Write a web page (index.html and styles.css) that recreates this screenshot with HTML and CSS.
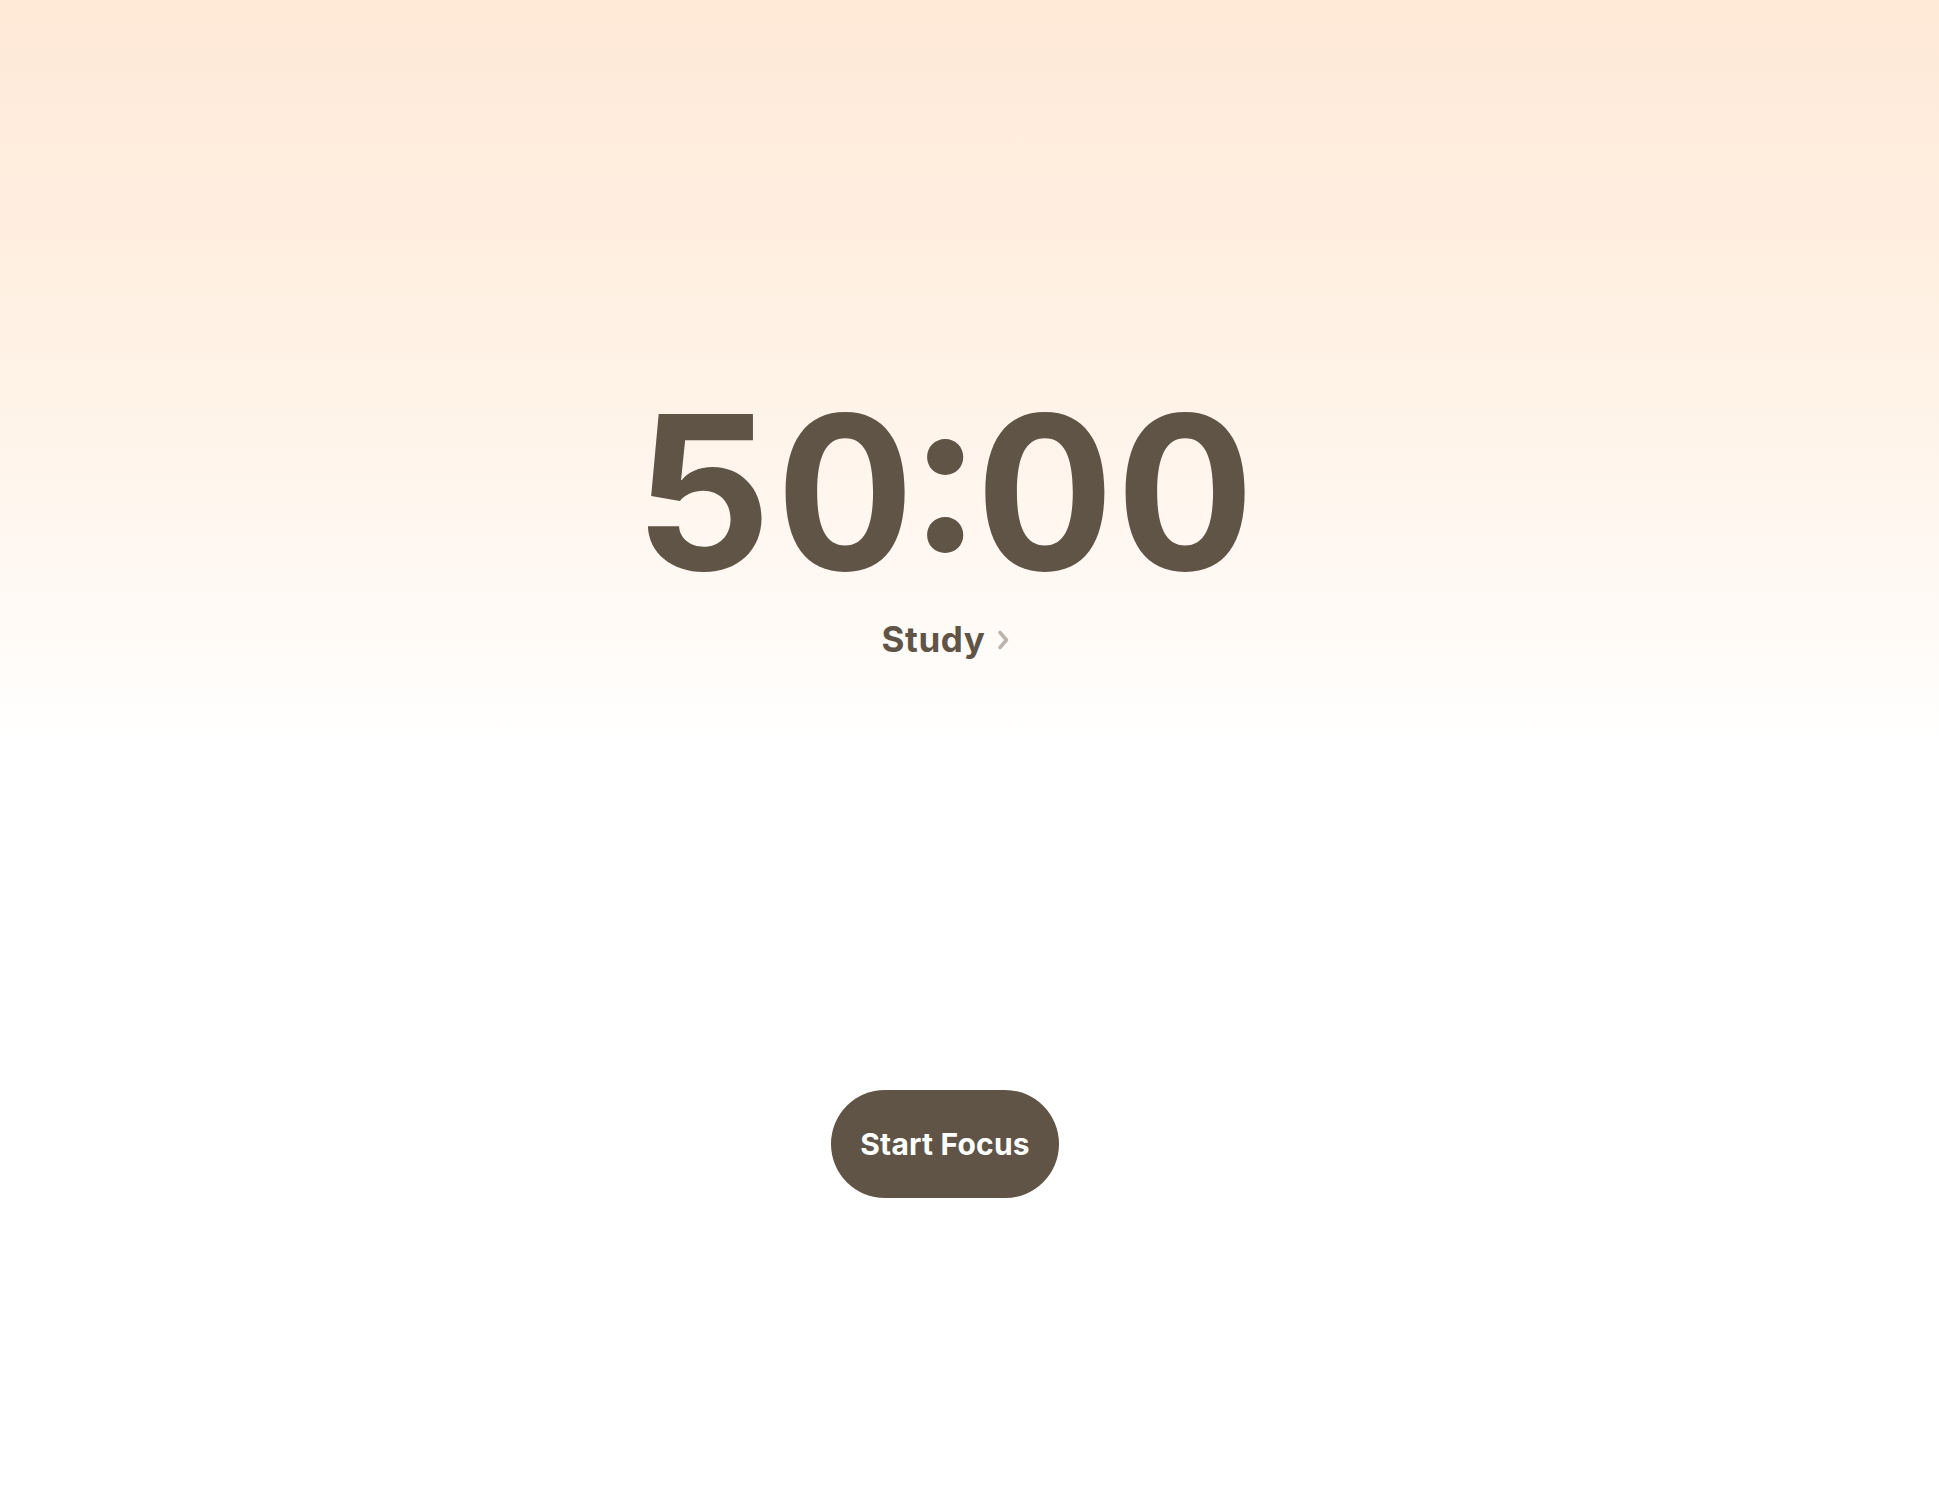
FILE: index.html
```html
<!DOCTYPE html>
<html lang="en">
<head>
<meta charset="utf-8">
<title>Focus Timer</title>
<link rel="stylesheet" href="styles.css">
</head>
<body>
<main class="page">
  <section class="timer-block">
    <div class="timer">50:00</div>
    <button class="mode" type="button">
      <span class="mode-label">Study</span>
      <svg class="chevron" viewBox="0 0 12 22" width="12" height="22" aria-hidden="true">
        <path d="M3 3.5 L9.5 11 L3 18.5" fill="none" stroke="currentColor" stroke-width="3.6" stroke-linecap="round" stroke-linejoin="round"/>
      </svg>
    </button>
  </section>
  <div class="actions">
    <button class="start" type="button">Start Focus</button>
  </div>
</main>
</body>
</html>
```
FILE: styles.css
```css
* { box-sizing: border-box; }
html, body { margin: 0; padding: 0; }
body {
  min-height: 100vh;
  font-family: "Inter", "Noto Sans", "Liberation Sans", sans-serif;
  background: linear-gradient(to bottom, #ffe9d7 0%, #fff1e4 22%, #fff8f2 38%, #ffffff 50%, #ffffff 100%);
  color: #605447;
}
.page {
  min-height: 100vh;
  display: flex;
  flex-direction: column;
  align-items: center;
  padding: 386px 49px 0 0;
}
.timer-block {
  display: flex;
  flex-direction: column;
  align-items: center;
}
.timer {
  font-size: 214px;
  font-weight: 700;
  line-height: 1;
  letter-spacing: 2px;
  text-indent: 2px;
  font-variant-numeric: tabular-nums;
  font-feature-settings: "tnum" 1, "case" 1;
  color: #605447;
}
.mode {
  margin-top: 18px;
  display: flex;
  align-items: center;
  gap: 11px;
  background: none;
  border: 0;
  padding: 0;
  font: inherit;
  cursor: pointer;
  color: #605447;
}
.mode-label {
  font-size: 35px;
  font-weight: 700;
  line-height: 1.2;
  letter-spacing: 0.6px;
}
.chevron {
  color: #bdb5ad;
  margin-top: 1px;
}
.actions {
  margin-top: 430px;
  display: flex;
  justify-content: center;
}
.start {
  border: 0;
  background: #605447;
  color: #ffffff;
  font-family: inherit;
  font-size: 30px;
  font-weight: 700;
  line-height: 36px;
  padding: 36px 29px;
  border-radius: 60px;
  letter-spacing: 0.2px;
  cursor: pointer;
}
```
